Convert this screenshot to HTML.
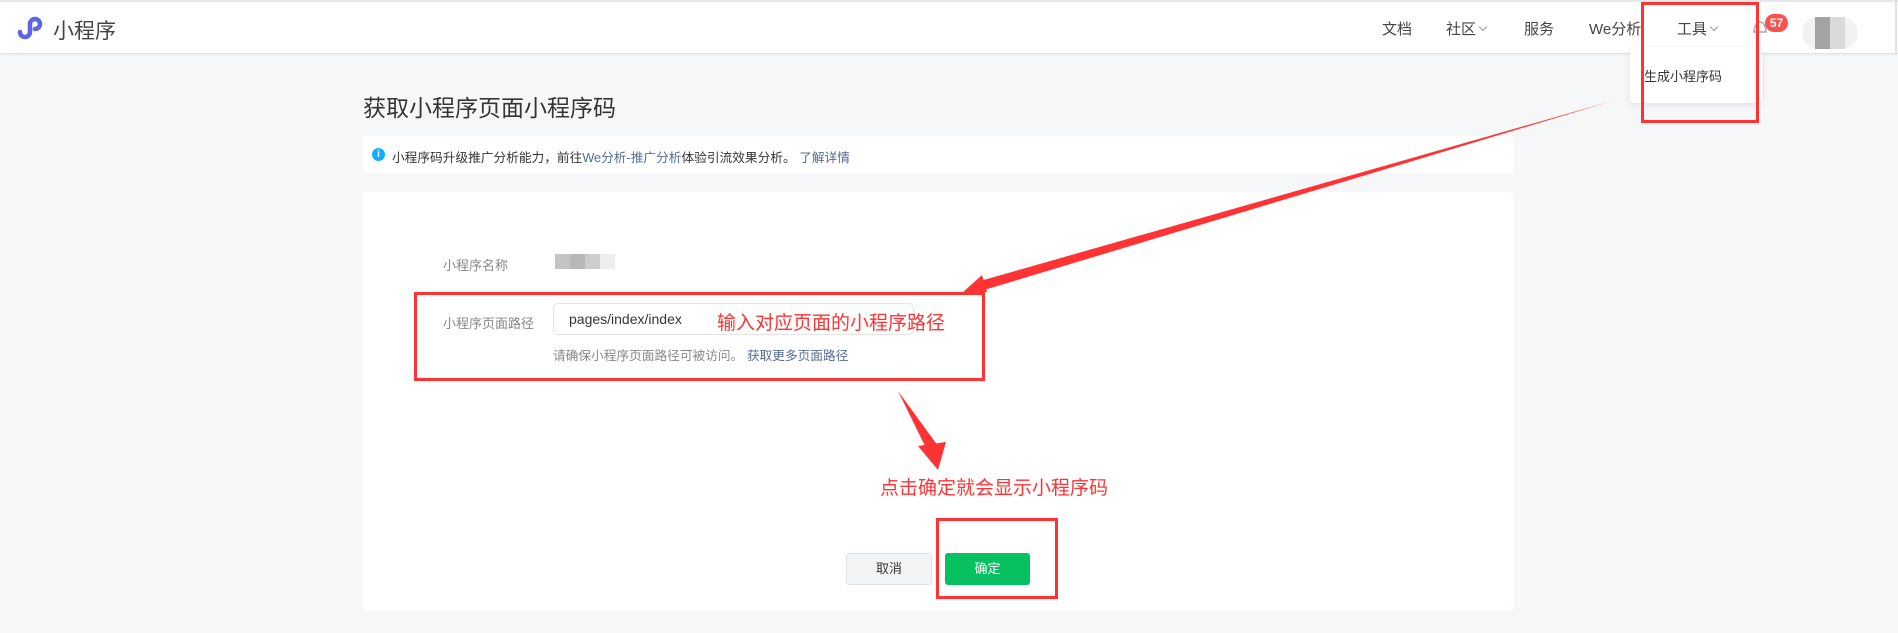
<!DOCTYPE html>
<html><head><meta charset="utf-8"><style>
*{margin:0;padding:0;box-sizing:border-box}
body{width:1898px;height:633px;overflow:hidden;background:#f6f7f9;font-family:"Liberation Sans","Noto Sans CJK SC",sans-serif;position:relative;color:#353535}
.a{position:absolute;white-space:nowrap}
.hdr{position:absolute;left:0;top:0;width:1898px;height:54px;background:#fff;border-top:2px solid #e8e8e8;border-bottom:1px solid #e2e2e2;box-shadow:0 1px 3px rgba(0,0,0,.05)}
.nav{font-size:15px;color:#444;top:18px}
.chev{display:inline-block;width:6px;height:6px;border-right:1px solid #999;border-bottom:1px solid #999;transform:rotate(45deg);margin-left:4px;position:relative;top:-4px}
.rb{position:absolute;border:3px solid #f33}
.red{color:#f33;font-size:19px}
</style></head><body>
<div class="hdr"></div>
<svg class="a" style="left:15px;top:13px" width="30" height="30" viewBox="0 0 30 30"><path d="M5 19 a5 5 0 1 0 10 0 V11 a5 5 0 1 1 5 5" fill="none" stroke="#5b63e8" stroke-width="4.5" stroke-linecap="round"/></svg>
<div class="a" style="left:53px;top:15px;font-size:21px;color:#444">小程序</div>
<div class="a nav" style="left:1382px">文档</div>
<div class="a nav" style="left:1446px">社区<span class="chev"></span></div>
<div class="a nav" style="left:1524px">服务</div>
<div class="a nav" style="left:1589px">We分析</div>
<div class="a nav" style="left:1677px">工具<span class="chev"></span></div>
<svg class="a" style="left:1750px;top:18px" width="20" height="20"><path d="M4 14 Q5 4 10 4 Q15 4 16 14 Z" fill="none" stroke="#aaa" stroke-width="1.5"/></svg>
<div class="a" style="left:1765px;top:14px;width:23px;height:18px;border-radius:9px;background:#fa5151;color:#fff;font-size:12px;font-weight:bold;text-align:center;line-height:18px">57</div>
<div class="a" style="left:1802px;top:17px;width:56px;height:32px;border-radius:16px;background:#f2f2f2"></div>
<div class="a" style="left:1815px;top:17px;width:15px;height:32px;background:#a3a3a3"></div>
<div class="a" style="left:1830px;top:17px;width:15px;height:32px;background:#dadada"></div>
<div class="a" style="left:1895px;top:0;width:2px;height:54px;background:#e2e2e2"></div>
<div class="a" style="left:1630px;top:47px;width:132px;height:56px;background:#fff;border-radius:4px;box-shadow:0 2px 8px rgba(0,0,0,.08)"></div>
<div class="a" style="left:1644px;top:66px;font-size:13px;color:#353535">生成小程序码</div>
<div class="rb" style="left:1641px;top:2px;width:118px;height:121px"></div>

<div class="a" style="left:363px;top:89px;font-size:23px;color:#353535">获取小程序页面小程序码</div>
<div class="a" style="left:363px;top:136px;width:1151px;height:37px;background:#fff;border-radius:3px"></div>
<div class="a" style="left:372px;top:148px;width:13px;height:13px;border-radius:50%;background:#10aeff;color:#fff;font-size:10px;text-align:center;line-height:13px;font-weight:bold">i</div>
<div class="a" style="left:392px;top:147px;font-size:12.7px;color:#353535">小程序码升级推广分析能力，前往<span style="color:#576b95">We分析-推广分析</span>体验引流效果分析。 <span style="color:#576b95">了解详情</span></div>

<div class="a" style="left:363px;top:192px;width:1151px;height:419px;background:#fff;border-radius:3px"></div>
<div class="a" style="left:443px;top:255px;font-size:13px;color:#888">小程序名称</div>
<div class="a" style="left:555px;top:254px;width:15px;height:15px;background:#c4c4c4"></div>
<div class="a" style="left:570px;top:254px;width:15px;height:15px;background:#b8b8b8"></div>
<div class="a" style="left:585px;top:254px;width:15px;height:15px;background:#cdcdcd"></div>
<div class="a" style="left:600px;top:254px;width:15px;height:15px;background:#eee"></div>
<div class="a" style="left:443px;top:313px;font-size:13px;color:#888">小程序页面路径</div>
<div class="a" style="left:553px;top:303px;width:361px;height:32px;border:1px solid #e5e5e5;border-radius:5px;background:#fff"></div>
<div class="a" style="left:569px;top:311px;font-size:14px;color:#353535">pages/index/index</div>
<div class="a red" style="left:717px;top:308px">输入对应页面的小程序路径</div>
<div class="a" style="left:553px;top:345px;font-size:12.7px;color:#888">请确保小程序页面路径可被访问。 <span style="color:#576b95">获取更多页面路径</span></div>
<div class="rb" style="left:414px;top:292px;width:571px;height:89px"></div>

<svg class="a" style="left:0;top:0" width="1898" height="633">
<polygon points="1612,101 980,281 984,290" fill="#f33"/>
<polygon points="962,293 982,275 987,292" fill="#f33"/>
<polygon points="898,391 926,448 938,446" fill="#f33"/>
<polygon points="938,470 918,446 946,442" fill="#f33"/>
</svg>
<div class="a red" style="left:880px;top:473px">点击确定就会显示小程序码</div>
<div class="a" style="left:846px;top:553px;width:86px;height:32px;border:1px solid #e2e2e2;border-radius:3px;background:#f2f3f5;font-size:13px;text-align:center;line-height:30px;color:#353535">取消</div>
<div class="a" style="left:945px;top:553px;width:85px;height:32px;border-radius:3px;background:#07c160;font-size:13px;text-align:center;line-height:32px;color:#fff">确定</div>
<div class="rb" style="left:936px;top:518px;width:122px;height:81px"></div>
</body></html>
